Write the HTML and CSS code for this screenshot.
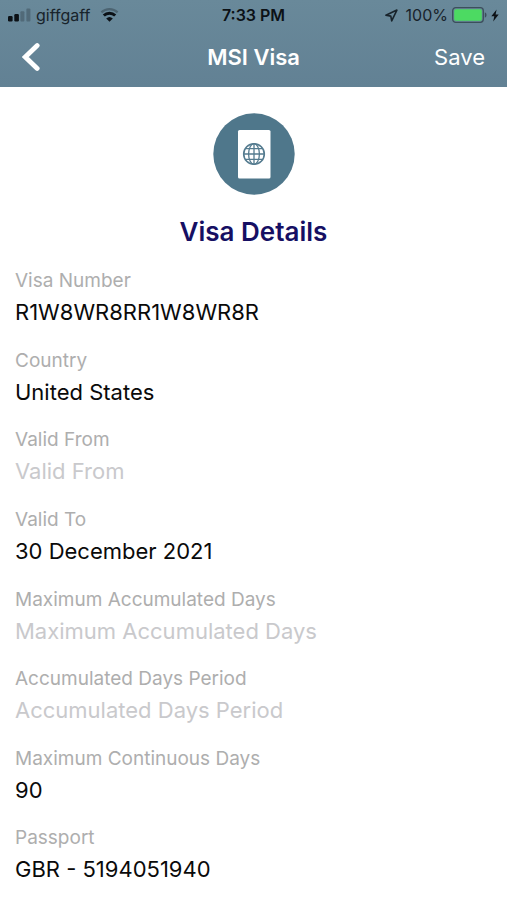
FILE: index.html
```html
<!DOCTYPE html>
<html lang="en">
<head>
<meta charset="utf-8">
<meta name="viewport" content="width=device-width, initial-scale=1">
<title>MSI Visa</title>
<link rel="stylesheet" href="styles.css">
</head>
<body>
<header class="header">
  <div class="status">
    <div class="status-side">
      <svg class="signal" width="23" height="14" viewBox="0 0 23 14" aria-hidden="true">
        <rect x="0" y="8" width="4.6" height="5.4" rx="1.2"/>
        <rect x="6.3" y="6" width="4.6" height="7.4" rx="1.2"/>
        <rect x="12.4" y="3.2" width="4" height="10.2" rx="1" opacity=".25"/>
        <rect x="18.4" y="0.6" width="4" height="12.8" rx="1" opacity=".25"/>
      </svg>
      <span>giffgaff</span>
      <svg class="wifi" width="19" height="14" viewBox="0 0 19 14" fill="none" stroke="#0c1116" aria-hidden="true">
        <path d="M1.4 4.4a11.6 11.6 0 0 1 16.2 0" stroke-width="2.2" opacity=".3"/>
        <path d="M3.8 7.6a8 8 0 0 1 11.4 0" stroke-width="2.9"/>
        <path d="M9.5 13.8 6.2 10.6a4.8 4.8 0 0 1 6.6 0z" fill="#0c1116" stroke="none"/>
      </svg>
    </div>
    <span class="time">7:33 PM</span>
    <div class="status-side status-right">
      <svg width="13" height="13" viewBox="0 0 13 13" fill="none" stroke="#18232b" stroke-width="1.6" stroke-linejoin="round" aria-hidden="true">
        <path d="M11.9 1.1.9 6.2l4.9.9.9 4.8z"/>
      </svg>
      <span class="percent">100%</span>
      <svg class="battery" width="35" height="16" viewBox="0 0 35 16" aria-hidden="true">
        <rect x=".7" y=".7" width="30.6" height="14.6" rx="3" fill="none" stroke="#3c4f5b" stroke-width="1.3"/>
        <rect x="2.2" y="2.2" width="27.6" height="11.6" rx="1.8" fill="#4cda62"/>
        <path d="M32.8 5.2q1.8.8 1.8 2.8t-1.8 2.8z" fill="#3c4f5b"/>
      </svg>
      <svg width="8" height="13" viewBox="0 0 8 13" fill="#0c1116" aria-hidden="true">
        <path d="M5.6.5.3 7.3h3L2.2 12.5 7.7 5.5H4.6z"/>
      </svg>
    </div>
  </div>
  <nav class="nav">
    <button class="back" type="button" aria-label="Back">
      <svg width="18" height="28" viewBox="0 0 18 28" fill="none" stroke="#fff" stroke-width="4.8" stroke-linecap="round" aria-hidden="true">
        <path d="M15.2 2.6 3.3 14l11.9 11.4"/>
      </svg>
    </button>
    <h1 class="nav-title">MSI Visa</h1>
    <button class="save" type="submit" form="visa">Save</button>
  </nav>
</header>
<main class="main">
  <div class="intro">
    <svg width="82" height="82" viewBox="0 0 82 82" aria-hidden="true">
      <circle cx="41" cy="41" r="40.7" fill="#4f778b"/>
      <rect x="25" y="17" width="32.5" height="48.5" rx="1.6" fill="#fff"/>
      <g fill="none" stroke="#547b8f" stroke-width="1.3">
        <circle cx="41" cy="41" r="10.3" stroke-width="1.6"/>
        <ellipse cx="41" cy="41" rx="5.4" ry="10.3"/>
        <path d="M41 30.7v20.6M30.7 41h20.6M32.2 35.6h17.6M32.2 46.4h17.6"/>
      </g>
    </svg>
    <h2 class="intro-title">Visa Details</h2>
  </div>
  <form class="form" id="visa">
    <div class="field"><label for="number">Visa Number</label><input id="number" type="text" value="R1W8WR8RR1W8WR8R"></div>
    <div class="field"><label for="country">Country</label><input id="country" type="text" value="United States"></div>
    <div class="field"><label for="from">Valid From</label><input id="from" type="text" placeholder="Valid From"></div>
    <div class="field"><label for="to">Valid To</label><input id="to" type="text" value="30 December 2021"></div>
    <div class="field"><label for="max-acc">Maximum Accumulated Days</label><input id="max-acc" type="text" placeholder="Maximum Accumulated Days"></div>
    <div class="field"><label for="period">Accumulated Days Period</label><input id="period" type="text" placeholder="Accumulated Days Period"></div>
    <div class="field"><label for="max-cont">Maximum Continuous Days</label><input id="max-cont" type="text" value="90"></div>
    <div class="field"><label for="passport">Passport</label><input id="passport" type="text" value="GBR - 5194051940"></div>
  </form>
</main>
</body>
</html>
```

FILE: styles.css
```css
* {
  box-sizing: border-box;
}

body {
  margin: 0;
  min-height: 100vh;
  display: flex;
  flex-direction: column;
  background: #fff;
  color: #0a0a0a;
  font-family: Inter, "Liberation Sans", sans-serif;
}

svg {
  display: block;
  flex: none;
}

button {
  margin: 0;
  padding: 0;
  border: 0;
  background: none;
  color: #fff;
  font: inherit;
}

.header {
  background: linear-gradient(#69899a, #628194);
}

.status,
.nav {
  display: grid;
  grid-template-columns: 1fr auto 1fr;
  align-items: center;
}

.status {
  height: 30px;
  padding: 0 8px;
  color: #18232b;
  font-size: 16px;
  line-height: 20px;
}

.status-side {
  display: flex;
  align-items: center;
}

.status-right {
  justify-content: flex-end;
}

.signal {
  margin-right: 5px;
  fill: #0c1116;
}

.wifi {
  margin-left: 10px;
}

.time {
  color: #0c1116;
  font-weight: 600;
}

.percent {
  margin-left: 8px;
}

.battery {
  margin: 0 4px;
}

.nav {
  height: 57px;
  padding: 0 22px 3px;
  color: #fff;
  font-size: 22px;
  line-height: 28px;
}

.back {
  justify-self: start;
}

.nav-title {
  margin: 0;
  font-size: 22px;
  font-weight: 600;
}

.save {
  justify-self: end;
}

.main {
  flex: 1;
  display: flex;
  flex-direction: column;
}

.intro {
  display: flex;
  flex-direction: column;
  align-items: center;
  gap: 21px;
  padding: 26px 15px 15px;
}

.intro-title {
  margin: 0;
  color: #160f63;
  font-size: 26px;
  font-weight: 600;
  line-height: 32px;
}

.form {
  flex: 1;
  display: grid;
  grid-auto-rows: 1fr;
}

.field {
  display: flex;
  flex-direction: column;
  gap: 3px;
  padding: 6px 15px 0;
}

.field label {
  color: #aeaeae;
  font-size: 19px;
  line-height: 24px;
}

.field input {
  width: 100%;
  height: 32px;
  margin: 0;
  padding: 0;
  border: 0;
  outline: 0;
  background: none;
  color: #0a0a0a;
  font: inherit;
  font-size: 22px;
}

.field input::placeholder {
  color: #c9c9cc;
  opacity: 1;
}
```
